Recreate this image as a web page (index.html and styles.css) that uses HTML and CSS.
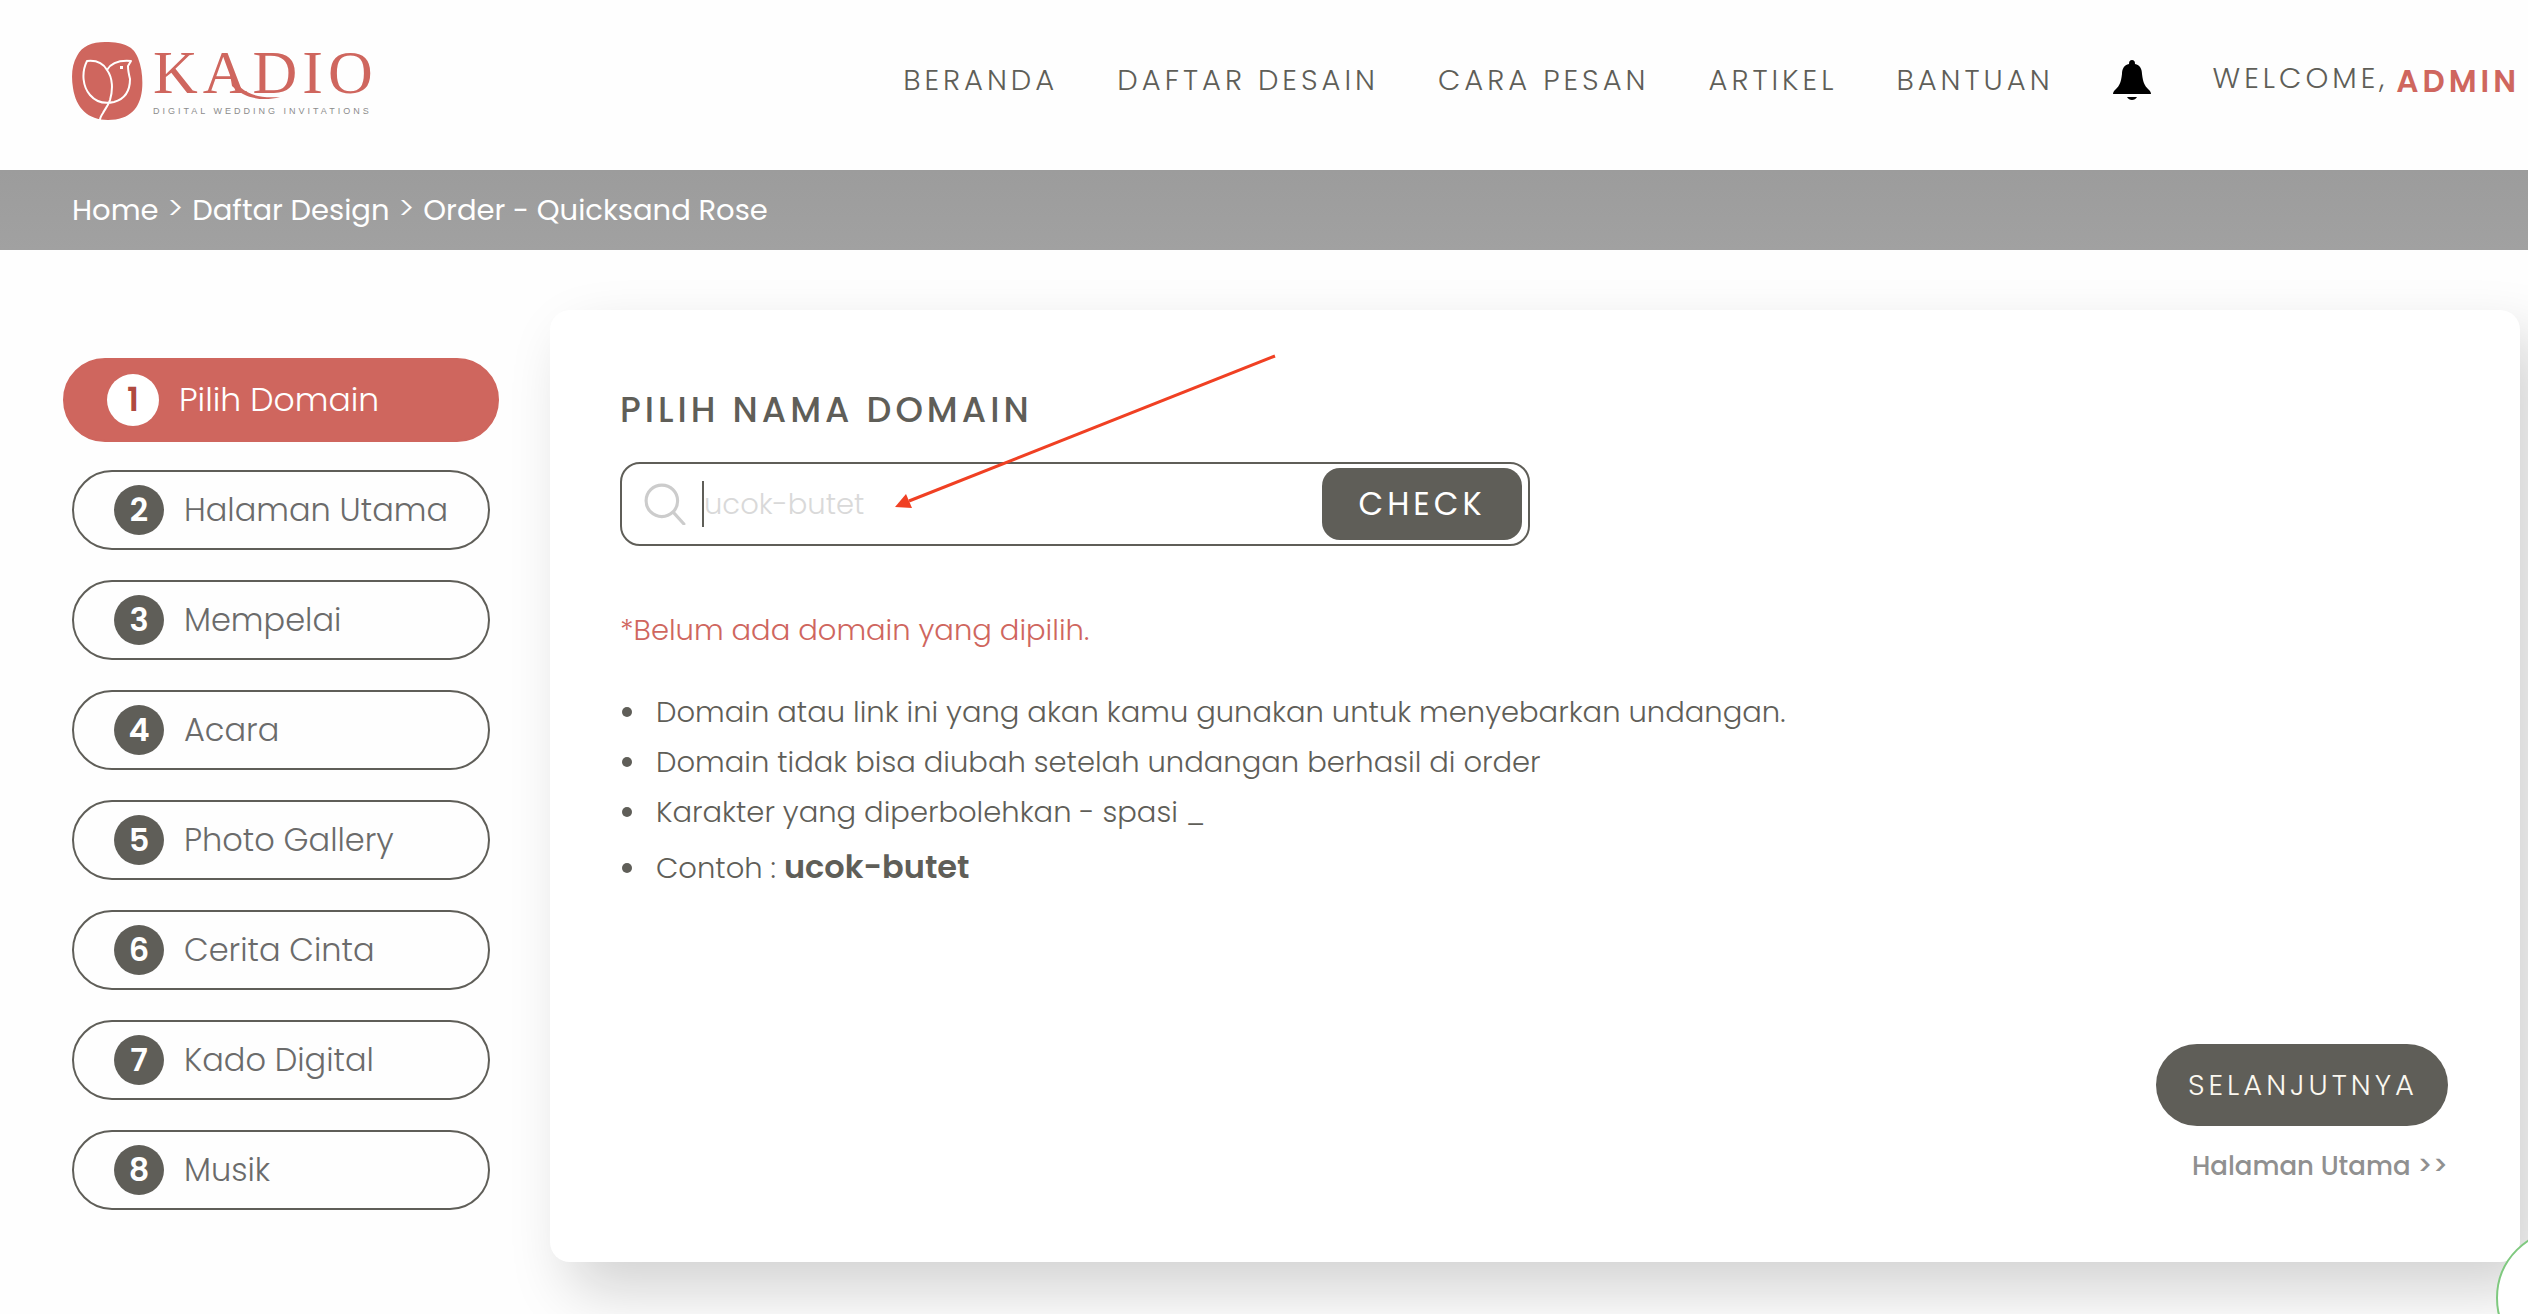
FILE: index.html
```html
<!DOCTYPE html>
<html lang="id">

<head>
    <meta charset="utf-8">
    <meta name="viewport" content="width=device-width, initial-scale=1">
    <title>Kadio - Order Quicksand Rose</title>
    <link rel="stylesheet" href="styles.css">
</head>

<body>
    <header class="header">
        <a class="logo" href="#" aria-label="Kadio">
            <svg class="logo-mark" viewBox="0 0 71 78" aria-hidden="true">
                <path fill="#cf665e" d="M33 0C53 0 62 5 66 16c4 10 5 22 4 32-2 18-12 30-34 30C16 78 4 66 1 46-1 34 0 22 5 14 10 4 20 0 33 0z" />
                <path fill="none" stroke="#fff" stroke-width="2" stroke-linejoin="round" stroke-linecap="round" d="M35 28C31 21 24 18 15 19c-6 12-4 26 3 34 6 7 15 9 24 7 11-3 16-12 16-23-1-4-2-9-2-13l3-5c-12-1-20 2-24 9 6 8 6 20 3 30-2 6-5 9-7 13-2 3-3 5-3 7" />
                <path fill="#fff" d="M48 24h3v3h-3z" />
            </svg>
            <span class="logo-text">
                <span class="logo-name">KADIO</span>
                <span class="logo-tagline">DIGITAL WEDDING INVITATIONS</span>
            </span>
            <svg class="logo-swash" viewBox="0 0 50 26" aria-hidden="true">
                <path fill="#cf665e" d="M0 0C10 17 22 25 50 23 32 28 14 24 2 12z" />
            </svg>
        </a>
        <nav class="nav">
            <a href="#">BERANDA</a>
            <a href="#">DAFTAR DESAIN</a>
            <a href="#">CARA PESAN</a>
            <a href="#">ARTIKEL</a>
            <a href="#">BANTUAN</a>
            <a class="bell" href="#" aria-label="Notifikasi">
                <svg viewBox="0 0 38 40" aria-hidden="true">
                    <path d="M19 0c2 0 3 1 3 4 5 1 7 5 7 10 1 9 3 12 6 15 2 2 3 3 3 5H0c0-2 1-3 3-5 3-3 5-6 6-15 0-5 2-9 7-10 0-3 1-4 3-4zM14 37h10c-1 2-3 3-5 3s-4-1-5-3z" />
                </svg>
            </a>
            <span class="welcome">WELCOME, <a class="user" href="#">ADMIN</a></span>
        </nav>
    </header>

    <div class="breadcrumb">
        <a href="#">Home</a>
        <span class="separator">&gt;</span>
        <a href="#">Daftar Design</a>
        <span class="separator">&gt;</span>
        <a href="#">Order - Quicksand Rose</a>
    </div>

    <main class="content">
        <aside class="steps">
            <a class="step active" href="#"><b>1</b>Pilih Domain</a>
            <a class="step" href="#"><b>2</b>Halaman Utama</a>
            <a class="step" href="#"><b>3</b>Mempelai</a>
            <a class="step" href="#"><b>4</b>Acara</a>
            <a class="step" href="#"><b>5</b>Photo Gallery</a>
            <a class="step" href="#"><b>6</b>Cerita Cinta</a>
            <a class="step" href="#"><b>7</b>Kado Digital</a>
            <a class="step" href="#"><b>8</b>Musik</a>
        </aside>

        <section class="card">
            <h1><label for="domain">PILIH NAMA DOMAIN</label></h1>
            <form class="search">
                <svg class="search-icon" viewBox="0 0 40 40" aria-hidden="true">
                    <circle cx="17" cy="17" r="15" />
                    <path d="M28 28l10 11" />
                </svg>
                <span class="caret"></span>
                <input id="domain" type="text" placeholder="ucok-butet">
                <button type="button">CHECK</button>
                <!-- pointer to the domain field -->
                <svg class="arrow" viewBox="0 0 382 156" aria-hidden="true">
                    <path class="arrow-line" d="M380 3L14 148" />
                    <path class="arrow-head" d="M0 154l11-13 6 14z" />
                </svg>
            </form>
            <p class="warning">*Belum ada domain yang dipilih.</p>
            <ul class="notes">
                <li>Domain atau link ini yang akan kamu gunakan untuk menyebarkan undangan.</li>
                <li>Domain tidak bisa diubah setelah undangan berhasil di order</li>
                <li>Karakter yang diperbolehkan - spasi _</li>
                <li class="example">Contoh : <strong>ucok-butet</strong></li>
            </ul>
            <div class="next">
                <button type="button">SELANJUTNYA</button>
                <a href="#">Halaman Utama &gt;&gt;</a>
            </div>
        </section>
    </main>

    <a class="chat" href="#" aria-label="Chat"></a>
</body>

</html>
```
FILE: styles.css
```css
* {
    box-sizing: border-box;
}

body {
    margin: 0;
    font-family: Poppins, Inter, sans-serif;
    font-size: 29px;
    font-weight: 300;
    color: #5f5e58;
    background: #fefefe;
    overflow-x: hidden;
}

a {
    color: inherit;
    text-decoration: none;
}

button,
input {
    font: inherit;
}

.header {
    display: flex;
    align-items: center;
    justify-content: space-between;
    height: 170px;
    padding: 0 8px 8px 72px;
}

.logo {
    position: relative;
    display: flex;
    gap: 10px;
}

.logo-mark {
    width: 71px;
    height: 78px;
}

.logo-text {
    display: flex;
    flex-direction: column;
}

.logo-name {
    font-family: "Liberation Serif", serif;
    font-size: 62px;
    font-weight: 400;
    line-height: 60px;
    letter-spacing: 5px;
    color: #cf665e;
}

.logo-tagline {
    font-family: "Liberation Sans", sans-serif;
    font-size: 9px;
    line-height: 18px;
    letter-spacing: 3px;
    color: #8c8c8c;
}

/* tail of the A */
.logo-swash {
    position: absolute;
    left: 158px;
    top: 32px;
    width: 50px;
    height: 26px;
}

.nav {
    display: flex;
    align-items: center;
    gap: 59px;
    padding-bottom: 2px;
    letter-spacing: 4px;
    white-space: nowrap;
}

.bell {
    margin-right: 3px;
}

.bell svg {
    display: block;
    width: 38px;
    height: 40px;
}

.welcome {
    display: flex;
    align-items: center;
    gap: 8px;
    padding-bottom: 4px;
    line-height: 40px;
}

.user {
    padding-top: 6px;
    font-size: 31px;
    font-weight: 600;
    color: #cf665e;
}

.breadcrumb {
    display: flex;
    gap: 9px;
    height: 80px;
    padding-left: 72px;
    line-height: 80px;
    font-weight: 400;
    color: #fff;
    background: linear-gradient(#9c9c9c, #a1a1a1);
}

.separator {
    font-size: 32px;
    font-weight: 300;
    line-height: 76px;
}

.content {
    display: flex;
    gap: 60px;
    padding: 60px 8px 52px 72px;
}

.steps {
    display: flex;
    flex-direction: column;
    flex: 0 0 418px;
    gap: 30px;
    padding-top: 50px;
}

.step {
    display: flex;
    align-items: center;
    gap: 20px;
    height: 80px;
    padding-left: 40px;
    border: 2px solid #5f5e58;
    border-radius: 40px;
    font-size: 32px;
    color: #6b6b6b;
}

.step b {
    width: 50px;
    border-radius: 50%;
    line-height: 50px;
    text-align: center;
    font-weight: 600;
    color: #fff;
    background: #5f5e58;
}

.step.active {
    height: 84px;
    margin: -2px -9px;
    padding-left: 42px;
    border-color: #cf665e;
    border-radius: 42px;
    font-size: 33px;
    color: #fff;
    background: #cf665e;
}

.step.active b {
    width: 52px;
    line-height: 52px;
    color: #b04a40;
    background: #fff;
}

.card {
    flex: 1;
    display: flex;
    flex-direction: column;
    min-height: 952px;
    padding: 76px 72px 76px 70px;
    border-radius: 20px;
    background: #fff;
    box-shadow: 20px 28px 60px #d2d2d2;
}

.card h1 {
    margin: 0 0 28px;
    font-size: 35px;
    line-height: 48px;
    font-weight: 500;
    letter-spacing: 4px;
}

.search {
    position: relative;
    display: flex;
    align-items: center;
    width: 910px;
    height: 84px;
    padding: 0 6px 0 22px;
    border: 2px solid #5f5e58;
    border-radius: 20px;
}

.search-icon {
    width: 42px;
    height: 42px;
    fill: none;
    stroke: #ccc;
    stroke-width: 3;
    stroke-linecap: round;
}

.caret {
    width: 2px;
    height: 46px;
    margin-left: 16px;
    background: #5f5e58;
}

.search input {
    flex: 1;
    min-width: 0;
    padding: 0;
    border: 0;
    outline: 0;
    background: none;
}

.search input::placeholder {
    color: #d9d9d9;
    opacity: 1;
}

.search button {
    width: 200px;
    height: 72px;
    border: 0;
    border-radius: 18px;
    font-size: 32px;
    font-weight: 400;
    letter-spacing: 4px;
    color: #fff;
    background: #5f5e58;
}

.arrow {
    position: absolute;
    left: 273px;
    top: -111px;
    width: 382px;
    height: 156px;
    pointer-events: none;
}

.arrow-line {
    stroke: #f04023;
    stroke-width: 3;
}

.arrow-head {
    fill: #f04023;
}

.warning {
    margin: 59px 0 0;
    line-height: 50px;
    color: #cf665e;
}

.notes {
    margin: 32px 0 0;
    padding-left: 2px;
    line-height: 50px;
    list-style: none;
}

.notes li::before {
    content: "";
    display: inline-block;
    width: 10px;
    height: 10px;
    margin: 0 24px 4px 0;
    border-radius: 50%;
    vertical-align: middle;
    background: #5f5e58;
}

.notes .example {
    line-height: 60px;
}

.example strong {
    font-size: 32px;
    font-weight: 600;
}

.next {
    display: flex;
    flex-direction: column;
    align-items: flex-end;
    gap: 20px;
    margin-top: auto;
}

.next button {
    height: 82px;
    padding: 0 30px 0 32px;
    border: 0;
    border-radius: 41px;
    letter-spacing: 4px;
    color: #fbf8f0;
    background: #5f5e58;
}

.next a {
    font-size: 26px;
    line-height: 40px;
    font-weight: 500;
    color: #909090;
}

.chat {
    position: fixed;
    right: -106px;
    bottom: -53px;
    width: 138px;
    height: 138px;
    border: 2px solid #7fc97f;
    border-radius: 50%;
    background: #fff;
}
```
